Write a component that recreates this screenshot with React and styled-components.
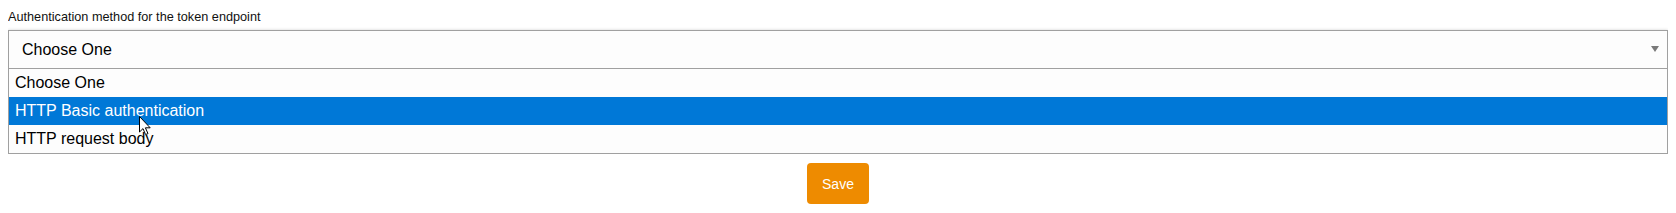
import React from "react";
import styled, { createGlobalStyle } from "styled-components";

const Global = createGlobalStyle`
  html, body { margin: 0; padding: 0; background: #ffffff; }
  body { margin: 8px; font-family: "Liberation Sans", Arial, sans-serif; color: #000; }
`;

const Form = styled.div`
  display: flex;
  flex-direction: column;
  position: relative;
`;

const Label = styled.label`
  display: block;
  font-size: 12.7px;
  line-height: 15px;
  color: #111;
  margin: 2px 0 5px 0;
`;

const SelectBox = styled.div`
  height: 37px;
  border: 1px solid #a0a0a0;
  background: #fdfdfd;
  box-shadow: 0 0 3px rgba(0, 0, 0, 0.18);
  display: flex;
  align-items: center;
  justify-content: space-between;
  padding: 0 8px 0 13px;
  font-size: 16px;
`;

const Arrow = styled.span`
  width: 0;
  height: 0;
  border-left: 4px solid transparent;
  border-right: 4px solid transparent;
  border-top: 6px solid #7a7a7a;
  margin-top: -2px;
`;

const List = styled.ul`
  list-style: none;
  margin: 0;
  padding: 0;
  border: 1px solid #a0a0a0;
  border-top: none;
  background: #fdfdfd;
  position: relative;
`;

const Option = styled.li`
  height: 28px;
  display: flex;
  align-items: center;
  padding: 0 6px;
  font-size: 16px;
  background: ${(p) => (p.$active ? "#0078d7" : "transparent")};
  color: ${(p) => (p.$active ? "#ffffff" : "#000000")};
`;

const Actions = styled.div`
  display: flex;
  justify-content: center;
  margin-top: 9px;
`;

const SaveButton = styled.button`
  background: #ee8b00;
  color: #ffffff;
  border: none;
  border-radius: 4px;
  height: 41px;
  padding: 0 15px;
  font-family: "Liberation Sans", Arial, sans-serif;
  font-size: 14px;
`;

const Cursor = styled.svg`
  position: absolute;
  left: 131px;
  top: 108px;
  width: 13px;
  height: 20px;
  pointer-events: none;
`;

export default function App() {
  const options = ["Choose One", "HTTP Basic authentication", "HTTP request body"];
  return (
    <>
      <Global />
      <Form>
        <Label>Authentication method for the token endpoint</Label>
        <SelectBox>
          <span>Choose One</span>
          <Arrow />
        </SelectBox>
        <List>
          {options.map((o, i) => (
            <Option key={o} $active={i === 1}>
              {o}
            </Option>
          ))}
        </List>
        <Cursor viewBox="0 0 13 20">
          <path
            d="M0.5 0.5 L0.5 16 L4 12.6 L6.6 18.6 L9 17.6 L6.4 11.8 L11.2 11.8 Z"
            fill="#ffffff"
            stroke="#000000"
            strokeWidth="1"
            strokeLinejoin="miter"
          />
        </Cursor>
        <Actions>
          <SaveButton>Save</SaveButton>
        </Actions>
      </Form>
    </>
  );
}
